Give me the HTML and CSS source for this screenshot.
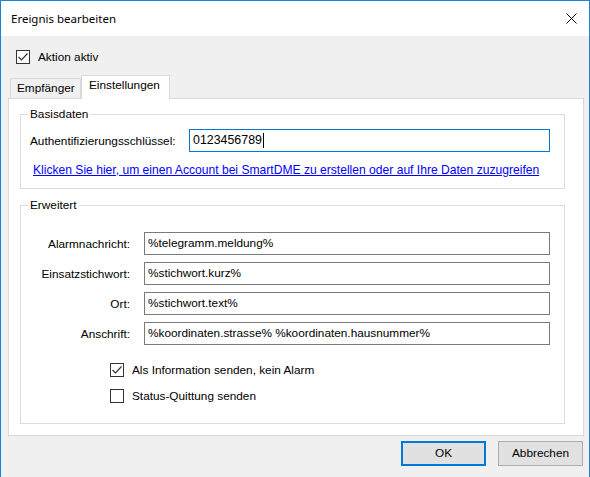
FILE: index.html
```html
<!DOCTYPE html>
<html lang="de">
<head>
<meta charset="utf-8">
<title>Ereignis bearbeiten</title>
<link rel="stylesheet" href="styles.css">
</head>
<body>
<div class="window">
  <div class="titlebar">
    <span class="title">Ereignis bearbeiten</span>
    <span class="close"><svg width="11" height="11" viewBox="0 0 11 11"><path d="M0.5 0.5 L10.5 10.5 M10.5 0.5 L0.5 10.5" stroke="#000" stroke-width="1" fill="none"/></svg></span>
  </div>
  <div class="client">
    <div class="check top-check">
      <span class="box"><svg width="12" height="12" viewBox="0 0 12 12"><path d="M1.5 6 L4.5 9 L10.5 2.5" stroke="#333" stroke-width="1.2" fill="none"/></svg></span>
      <span class="check-text">Aktion aktiv</span>
    </div>
    <div class="tabs">
      <div class="tab">Empfänger</div>
      <div class="tab active">Einstellungen</div>
    </div>
    <div class="panel">
      <div class="group g1">
        <span class="legend">Basisdaten</span>
        <div class="auth-row">
          <span class="auth-label">Authentifizierungsschlüssel:</span>
          <div class="input focused">0123456789<span class="caret"></span></div>
        </div>
        <a class="link" href="#">Klicken Sie hier, um einen Account bei SmartDME zu erstellen oder auf Ihre Daten zuzugreifen</a>
      </div>
      <div class="group g2">
        <span class="legend">Erweitert</span>
        <div class="rows">
          <div class="row"><span class="row-label">Alarmnachricht:</span><div class="input">%telegramm.meldung%</div></div>
          <div class="row"><span class="row-label">Einsatzstichwort:</span><div class="input">%stichwort.kurz%</div></div>
          <div class="row"><span class="row-label">Ort:</span><div class="input">%stichwort.text%</div></div>
          <div class="row"><span class="row-label">Anschrift:</span><div class="input">%koordinaten.strasse% %koordinaten.hausnummer%</div></div>
        </div>
        <div class="checks">
          <div class="check">
            <span class="box"><svg width="12" height="12" viewBox="0 0 12 12"><path d="M1.5 6 L4.5 9 L10.5 2.5" stroke="#333" stroke-width="1.2" fill="none"/></svg></span>
            <span class="check-text">Als Information senden, kein Alarm</span>
          </div>
          <div class="check">
            <span class="box"></span>
            <span class="check-text">Status-Quittung senden</span>
          </div>
        </div>
      </div>
    </div>
    <div class="buttons">
      <div class="btn default">OK</div>
      <div class="btn">Abbrechen</div>
    </div>
  </div>
</div>
</body>
</html>
```

FILE: styles.css
```css
* { box-sizing: border-box; }
html, body { margin: 0; padding: 0; }
body {
  width: 590px;
  height: 477px;
  overflow: hidden;
  background: #f0f0f0;
  font-family: "Liberation Sans", Arial, sans-serif;
  font-size: 11.8px;
  color: #000;
}
.window {
  width: 590px;
  height: 477px;
  border: 1px solid #1883d7;
  border-bottom: none;
  background: #f0f0f0;
  display: flex;
  flex-direction: column;
}
.titlebar {
  height: 35px;
  background: #fff;
  display: flex;
  align-items: center;
  justify-content: space-between;
  padding: 0 12px 0 10px;
  flex: none;
}
.title {
  font-family: "Noto Sans", "Open Sans", sans-serif;
  font-size: 11.5px;
  color: #000;
  padding-bottom: 1px;
}
.close {
  display: flex;
  width: 11px;
  height: 11px;
  margin-bottom: 1px;
}
.client {
  flex: 1;
  display: flex;
  flex-direction: column;
}
.check {
  display: flex;
  align-items: center;
  height: 14px;
}
.box {
  width: 14px;
  height: 14px;
  border: 1px solid #333;
  background: #fff;
  display: flex;
  align-items: center;
  justify-content: center;
  flex: none;
}
.box svg { display: block; }
.check-text {
  margin-left: 8px;
  line-height: 14px;
}
.top-check {
  margin: 14px 0 0 15px;
}
.tabs {
  display: flex;
  align-items: flex-end;
  margin: 11px 0 0 9px;
  height: 23px;
}
.tab {
  height: 20px;
  line-height: 19px;
  padding: 0 6px 0 6px;
  border: 1px solid #d9d9d9;
  border-bottom: none;
  background: #f0f0f0;
  width: 71px;
}
.tab.active {
  height: 24px;
  margin-bottom: -1px;
  background: #fff;
  width: 89px;
  padding-left: 7px;
  line-height: 19px;
  position: relative;
  z-index: 1;
}
.panel {
  margin-left: 7px;
  width: 576px;
  height: 338px;
  border: 1px solid #d9d9d9;
  background: #fff;
  display: flex;
  flex-direction: column;
}
.group {
  border: 1px solid #dcdcdc;
  margin-left: 11px;
  width: 545px;
  display: flex;
  flex-direction: column;
}
.g1 { margin-top: 15px; padding-bottom: 10px; height: 75px; }
.g2 { margin-top: 16px; height: 219px; }
.legend {
  display: block;
  align-self: flex-start;
  margin: -8px 0 0 7px;
  padding: 0 2px;
  background: #fff;
  line-height: 14px;
  height: 14px;
}
.auth-row {
  display: flex;
  align-items: center;
  margin: 8px 0 0 9px;
  height: 23px;
}
.auth-label {
  width: 159px;
  flex: none;
}
.input {
  height: 23px;
  border: 1px solid #7a7a7a;
  background: #fff;
  padding: 0 0 0 3px;
  line-height: 21px;
  white-space: nowrap;
  overflow: hidden;
  display: flex;
  align-items: center;
}
.auth-row .input {
  width: 361px;
  font-size: 12.4px;
}
.input.focused {
  border-color: #0078d7;
}
.caret {
  display: inline-block;
  width: 1px;
  height: 15px;
  background: #000;
  margin-left: 1px;
}
.link {
  display: block;
  align-self: flex-start;
  margin: 11px 0 0 12px;
  color: #0000ff;
  text-decoration: underline;
  line-height: 14px;
  font-size: 12.1px;
}
.rows {
  display: flex;
  flex-direction: column;
  gap: 7px;
  margin-top: 20px;
}
.row {
  display: flex;
  align-items: center;
  height: 23px;
}
.row-label {
  width: 109px;
  text-align: right;
  flex: none;
}
.row .input {
  margin-left: 14px;
  width: 406px;
}
.checks {
  display: flex;
  flex-direction: column;
  gap: 12px;
  margin: 18px 0 0 89px;
}
.buttons {
  display: flex;
  justify-content: flex-end;
  gap: 12px;
  margin: 5px 6px 0 0;
}
.btn {
  width: 85px;
  height: 25px;
  border: 1px solid #adadad;
  background: #e1e1e1;
  display: flex;
  align-items: center;
  justify-content: center;
  padding-bottom: 1px;
}
.btn.default {
  border: 2px solid #0078d7;
}
```
